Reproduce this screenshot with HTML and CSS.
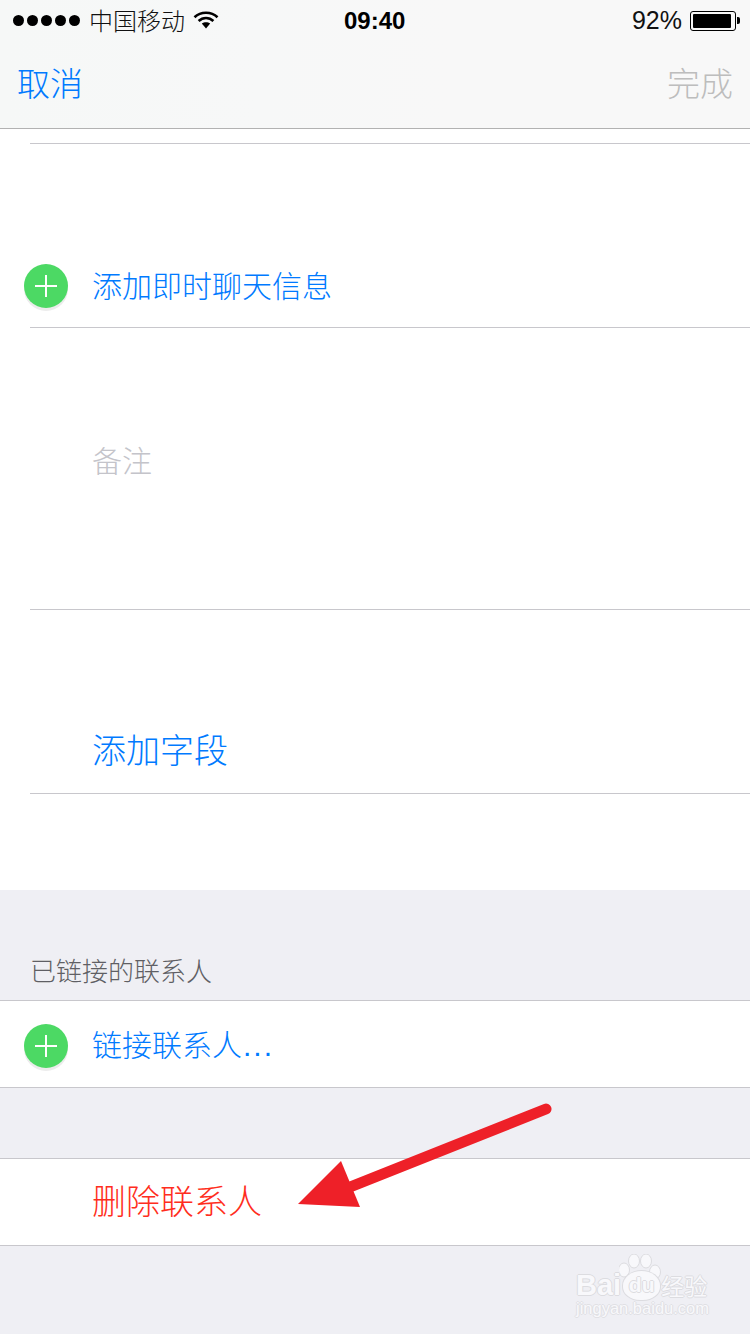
FILE: index.html
```html
<!DOCTYPE html>
<html lang="zh-CN">
<head>
<meta charset="utf-8">
<title>编辑联系人</title>
<link rel="stylesheet" href="styles.css">
</head>
<body>
<div class="page">
  <header class="top">
    <div class="status">
      <div class="status-left">
        <div class="dots"><i></i><i></i><i></i><i></i><i></i></div>
        <span class="carrier">中国移动</span>
        <svg class="wifi" width="26" height="20" viewBox="0 0 26 20"><path d="M1.5 7.2C7.8 1.2 18.2 1.2 24.5 7.2" fill="none" stroke="#000" stroke-width="2.6"/><path d="M5.6 11C9.9 7 16.100 7 20.400 11" fill="none" stroke="#000" stroke-width="2.600"/><path d="M8.800 13.600C11.300 11.700 14.700 11.700 17.200 13.600L13 18.500Z" fill="#000"/></svg>
      </div>
      <div class="time">09:40</div>
      <div class="status-right">
        <span class="pct">92<span class="pct-sign">%</span></span>
        <div class="battery"><div class="battery-fill"></div></div>
        <div class="battery-tip"></div>
      </div>
    </div>
    <nav class="nav">
      <span class="nav-btn cancel">取消</span>
      <span class="nav-btn done">完成</span>
    </nav>
  </header>

  <section class="card">
    <div class="row row-stub"></div>
    <div class="row row-add">
      <span class="plus"><svg width="24" height="24" viewBox="0 0 24 24"><path d="M12 1V23M1 12H23" stroke="#fff" stroke-width="2"/></svg></span>
      <span class="link">添加即时聊天信息</span>
    </div>
    <div class="row row-note"><span class="note">备注</span></div>
    <div class="row row-field"><span class="link big">添加字段</span></div>
  </section>

  <h2 class="section-label">已链接的联系人</h2>
  <div class="block block-link">
    <span class="plus"><svg width="24" height="24" viewBox="0 0 24 24"><path d="M12 1V23M1 12H23" stroke="#fff" stroke-width="2"/></svg></span>
    <span class="link">链接联系人<span class="ellipsis">...</span></span>
  </div>
  <div class="block block-delete"><span class="delete">删除联系人</span></div>

  <svg class="arrow" width="285" height="120" viewBox="0 0 285 120"><path d="M266 9L60 91" stroke="#ee2028" stroke-width="11" stroke-linecap="round" fill="none"/><path d="M18 104L61 61L80 107Z" fill="#ee2028"/></svg>

  <div class="mark">
    <svg class="paw" width="46" height="44" viewBox="0 0 46 44"><g fill="#f8f8fb" stroke="#dcdce0" stroke-width="1"><ellipse cx="15" cy="7" rx="5.500" ry="7"/><ellipse cx="27" cy="7" rx="5.500" ry="7"/><ellipse cx="5" cy="16" rx="5.500" ry="7"/><ellipse cx="36" cy="18" rx="5.500" ry="7"/></g></svg>
    <div class="mark-line"><span class="mark-bai">Bai</span><span class="mark-du">du</span><span class="mark-cn">经验</span></div>
    <div class="mark-url">jingyan.baidu.com</div>
  </div>
</div>
</body>
</html>
```
FILE: styles.css
```css
* { box-sizing: border-box; }
html, body { margin: 0; padding: 0; }
body {
  width: 750px;
  height: 1334px;
  overflow: hidden;
  font-family: "Noto Sans CJK SC", "Liberation Sans", sans-serif;
  font-weight: 300;
}
.page {
  position: relative;
  width: 750px;
  height: 1334px;
  background: #efeff4;
  overflow: hidden;
}
.top {
  height: 129px;
  background: linear-gradient(90deg, #f6f8f7 0, #f7f8f8 35%, #f8f8f8 60%);
  border-bottom: 1px solid #b2b2b2;
}
.status {
  height: 41px;
  display: flex;
  align-items: center;
  justify-content: space-between;
  position: relative;
  padding: 0 10px 0 13px;
  color: #000;
}
.status-left, .status-right { display: flex; align-items: center; }
.dots { display: flex; gap: 3px; }
.dots i { width: 11px; height: 11px; border-radius: 50%; background: #000; display: block; }
.carrier { font-size: 24px; line-height: 39px; height: 41px; margin-left: 9px; color: #111; }
.wifi { margin-left: 8px; margin-top: -2px; }
.time {
  position: absolute;
  left: 344px;
  top: 0;
  font-family: "Liberation Sans", sans-serif;
  font-weight: 700;
  font-size: 24px;
  line-height: 41px;
}
.pct {
  font-family: "Liberation Sans", sans-serif;
  font-weight: 400;
  font-size: 25px;
  line-height: 41px;
  color: #111;
}
.pct-sign { margin-left: 0; }
.battery {
  width: 46px;
  height: 20px;
  margin-left: 8px;
  border: 1px solid #000;
  border-radius: 3px;
  padding: 2px;
}
.battery-fill { width: 38px; height: 14px; background: #000; border-radius: 1px; }
.battery-tip { width: 3px; height: 7px; background: #000; border-radius: 0 2px 2px 0; margin-left: 1px; }
.nav {
  height: 87px;
  display: flex;
  align-items: flex-start;
  justify-content: space-between;
  padding: 18px 17px 0;
}
.nav-btn { font-size: 33px; line-height: 47px; }
.cancel { color: #007aff; }
.done { color: #bdbdbd; }
.card { height: 761px; background: #fff; }
.row { margin-left: 30px; border-bottom: 1px solid #c8c7cc; display: flex; }
.row-stub { height: 15px; }
.row-add { height: 184px; align-items: flex-end; margin-left: 0; border-bottom: 0; padding: 0 0 20px 24px; position: relative; }
.row-add::after {
  content: "";
  position: absolute;
  left: 30px;
  right: 0;
  bottom: 0;
  height: 1px;
  background: #c8c7cc;
}
.row-note { height: 282px; padding: 109px 0 0 62px; }
.row-field { height: 184px; padding: 115px 0 0 62px; }
.plus {
  width: 44px;
  height: 44px;
  flex: none;
  border-radius: 50%;
  background: #4cd964;
  box-shadow: 0 3px 0 #ececec;
  display: flex;
  align-items: center;
  justify-content: center;
}
.link { font-size: 30px; line-height: 44px; color: #007aff; margin-left: 24px; }
.row-add .link { margin-bottom: 2px; }
.link.big { font-size: 34px; line-height: 48px; margin-left: 0; }
.note { font-size: 30px; line-height: 44px; color: #c4c4ca; }
.section-label {
  margin: 0;
  height: 111px;
  padding: 58px 0 0 30px;
  font-size: 26px;
  line-height: 44px;
  font-weight: 300;
  color: #5f5f64;
  border-bottom: 1px solid #c8c7cc;
}
.block {
  height: 87px;
  background: #fff;
  border-bottom: 1px solid #c8c7cc;
  display: flex;
  align-items: center;
  padding-left: 24px;
}
.block-link { padding-top: 4px; }
.block-link .link { margin-bottom: 4px; }
.ellipsis { letter-spacing: 2px; font-weight: 400; font-family: "Liberation Sans", sans-serif; margin-left: 1px; }
.block-delete {
  height: 88px;
  margin-top: 70px;
  border-top: 1px solid #c8c7cc;
  padding-left: 92px;
  padding-bottom: 4px;
}
.delete { font-size: 34px; line-height: 48px; color: #ff2d20; }
.arrow { position: absolute; left: 280px; top: 1100px; }
.mark {
  position: absolute;
  left: 576px;
  top: 1254px;
  width: 140px;
  height: 66px;
  color: #f8f8fb;
}
.paw { position: absolute; left: 43px; top: 0; }
.mark-line {
  position: absolute;
  left: 0;
  top: 13px;
  display: flex;
  align-items: center;
  height: 36px;
  white-space: nowrap;
  font-family: "Liberation Sans", sans-serif;
  font-weight: 700;
  text-shadow: 1px 0 #dcdce0, -1px 0 #dcdce0, 0 1px #dcdce0, 0 -1px #dcdce0;
}
.mark-bai { font-size: 29px; }
.mark-du {
  font-size: 21px;
  width: 37px;
  height: 29px;
  line-height: 27px;
  text-align: center;
  margin-left: 2px;
  background: #f8f8fb;
  border-radius: 50% 50% 46% 46%;
  box-shadow: 0 0 0 1px #dcdce0;
}
.mark-cn { font-family: "Noto Sans CJK SC", sans-serif; font-weight: 400; font-size: 23px; margin-left: 1px; }
.mark-url {
  position: absolute;
  left: 0;
  top: 44px;
  font-family: "Liberation Sans", sans-serif;
  font-size: 16.500px;
  line-height: 20px;
  white-space: nowrap;
  font-weight: 400;
  text-shadow: 1px 0 #e0e0e4, -1px 0 #e0e0e4, 0 1px #e0e0e4, 0 -1px #e0e0e4;
}
```
